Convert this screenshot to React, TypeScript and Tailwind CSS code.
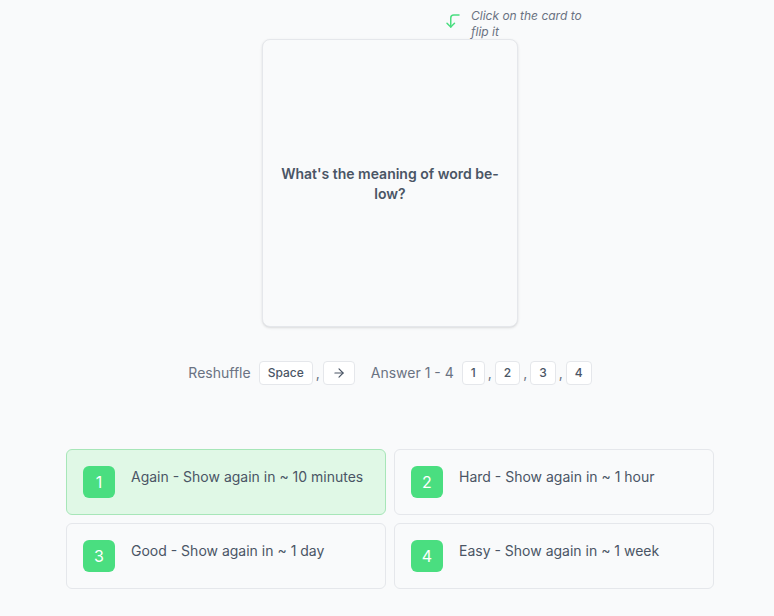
import { CornerLeftDown, ArrowRight } from "lucide-react";

const answers = [
  { key: "1", label: "Again - Show again in ~ 10 minutes", active: true },
  { key: "2", label: "Hard - Show again in ~ 1 hour", active: false },
  { key: "3", label: "Good - Show again in ~ 1 day", active: false },
  { key: "4", label: "Easy - Show again in ~ 1 week", active: false },
];

function Kbd({ children }: { children: React.ReactNode }) {
  return (
    <kbd className="inline-flex h-6 min-w-[22px] items-center justify-center rounded border border-gray-200 bg-white px-2 text-xs font-medium text-gray-600 font-['Inter',sans-serif]">
      {children}
    </kbd>
  );
}

export default function App() {
  return (
    <div className="min-h-[616px] bg-gray-50 pl-[6px] font-['Inter',sans-serif] text-gray-600">
      {/* Card Section */}
      <div className="flex justify-center pt-[39px]">
        <div className="relative">
          <div className="absolute left-[182px] top-[-31px] flex w-[140px] items-start gap-[9px]">
            <CornerLeftDown size={18} strokeWidth={2} className="mt-[4px] shrink-0 text-[#4ade80]" />
            <p className="text-xs italic leading-4 text-gray-500">
              Click on the card to flip it
            </p>
          </div>
          <div className="flex h-[288px] w-[256px] cursor-pointer items-center justify-center rounded-lg border border-gray-200 bg-gray-50 px-4 shadow-sm">
            <p className="mt-[2px] text-center text-sm font-semibold leading-5 text-gray-600">
              What's the meaning of word be-
              <br />
              low?
            </p>
          </div>
        </div>
      </div>

      {/* Shortcuts */}
      <div className="mt-[34px] flex items-center justify-center text-sm text-gray-500">
        <span className="mr-2">Reshuffle</span>
        <Kbd>Space</Kbd>
        <span className="mx-[3px]">,</span>
        <Kbd>
          <ArrowRight size={14} />
        </Kbd>
        <span className="ml-4 mr-2">Answer 1 - 4</span>
        <Kbd>1</Kbd>
        <span className="mx-[3px]">,</span>
        <Kbd>2</Kbd>
        <span className="mx-[3px]">,</span>
        <Kbd>3</Kbd>
        <span className="mx-[3px]">,</span>
        <Kbd>4</Kbd>
      </div>

      {/* Answer Buttons */}
      <div className="mx-auto mt-[64px] grid w-[648px] grid-cols-2 gap-2">
        {answers.map((a) => (
          <button
            key={a.key}
            className={`flex h-[66px] items-start gap-4 rounded-md border p-4 text-left ${
              a.active
                ? "border-[#a7e6b8] bg-[#e0f8e6]"
                : "border-gray-200 bg-gray-50"
            }`}
          >
            <span className="flex h-8 w-8 shrink-0 items-center justify-center rounded-md bg-[#4ade80] text-base text-white">
              {a.key}
            </span>
            <span className="text-sm leading-[22px] text-gray-600">{a.label}</span>
          </button>
        ))}
      </div>
    </div>
  );
}
